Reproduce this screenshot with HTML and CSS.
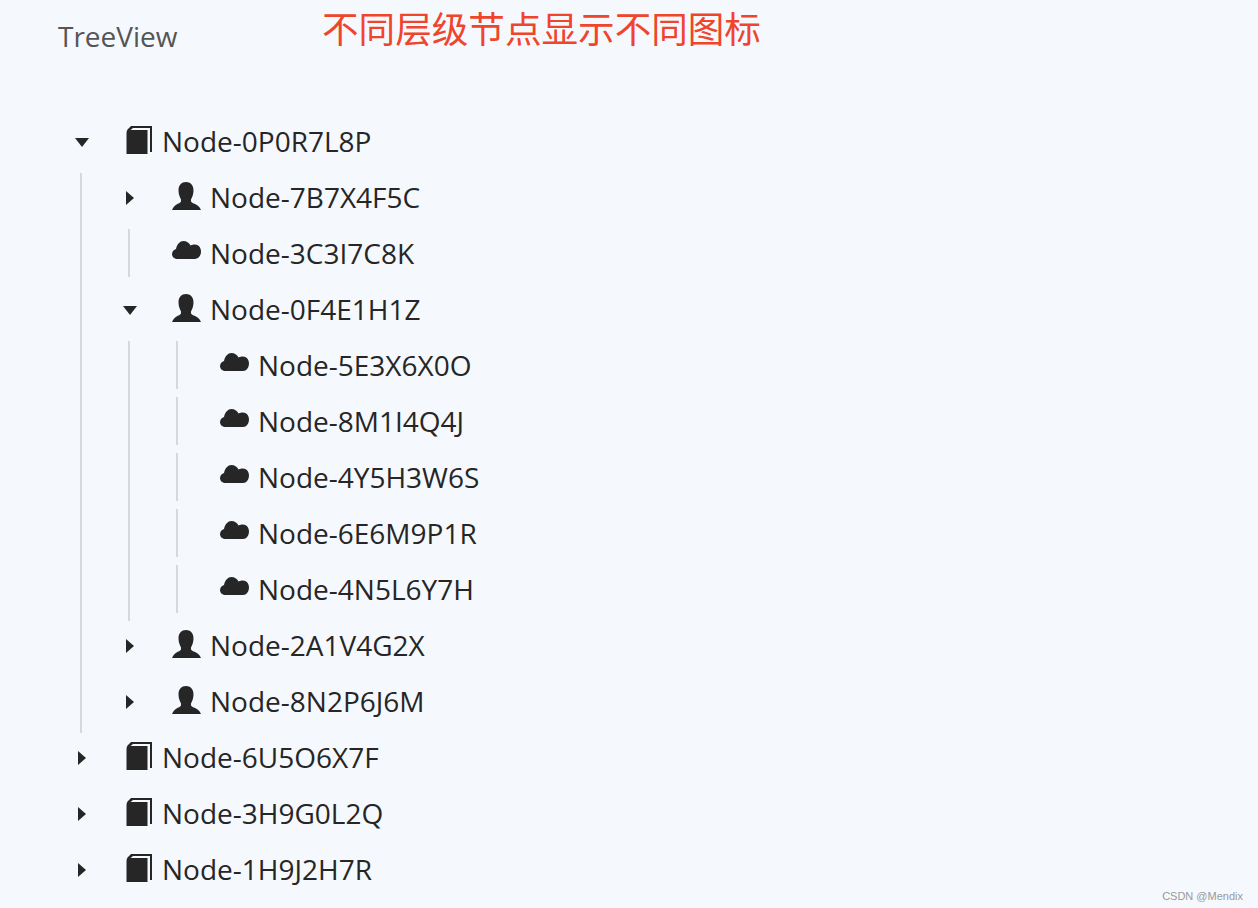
FILE: index.html
```html
<!DOCTYPE html>
<html lang="zh-CN">
<head>
    <meta charset="UTF-8">
    <meta name="viewport" content="width=device-width, initial-scale=1.0">
    <title>TreeView</title>
    <link rel="stylesheet" href="styles.css">
</head>
<body>
    <svg class="defs" width="0" height="0">
        <symbol id="book" viewBox="0 0 30 30">
            <path d="M2.500 8C2.500 5 3 4 4.500 2.500L7 0H28V26H26V2H9L6.500 4H23.500V28H2.500Z"/>
        </symbol>
        <symbol id="user" viewBox="0 0 30 30">
            <path d="M14 0C18.500 0 21.500 3 21.500 8.500C21.500 12.500 20 15.500 19 17.500V19.500C20 21 22 21.500 24 22.500C27 24 28 26 29 28H0C1 26 2 24 4.500 22.500C6.500 21.500 8 21 9 19.500V17.500C8 15.500 6.500 12.500 6.500 8.500C6.500 3 9.500 0 14 0Z"/>
        </symbol>
        <symbol id="cloud" viewBox="0 0 30 30">
            <path d="M6 21C2.500 21 0 19 0 16C0 13.500 2 11.500 4 11C5 6 8 3 11.500 3C14.500 3 17 4.500 18.500 7.500C20 6.500 21.500 6.500 23 6.500C26.500 6.500 29 9.500 29 13.500C29 17.500 26.500 21 23 21Z"/>
        </symbol>
    </svg>

    <h1 class="title">TreeView</h1>
    <div class="note">不同层级节点显示不同图标</div>

    <ul class="tree">
        <li>
            <div class="row"><span class="toggle"><i class="caret-down"></i></span><svg class="icon"><use href="#book"/></svg><span>Node-0P0R7L8P</span></div>
            <ul class="children">
                <li><div class="row"><span class="toggle"><i class="caret-right"></i></span><svg class="icon"><use href="#user"/></svg><span>Node-7B7X4F5C</span></div></li>
                <li><div class="row"><span class="toggle"><i class="leaf-line"></i></span><svg class="icon"><use href="#cloud"/></svg><span>Node-3C3I7C8K</span></div></li>
                <li>
                    <div class="row"><span class="toggle"><i class="caret-down"></i></span><svg class="icon"><use href="#user"/></svg><span>Node-0F4E1H1Z</span></div>
                    <ul class="children">
                        <li><div class="row"><span class="toggle"><i class="leaf-line"></i></span><svg class="icon"><use href="#cloud"/></svg><span>Node-5E3X6X0O</span></div></li>
                        <li><div class="row"><span class="toggle"><i class="leaf-line"></i></span><svg class="icon"><use href="#cloud"/></svg><span>Node-8M1I4Q4J</span></div></li>
                        <li><div class="row"><span class="toggle"><i class="leaf-line"></i></span><svg class="icon"><use href="#cloud"/></svg><span>Node-4Y5H3W6S</span></div></li>
                        <li><div class="row"><span class="toggle"><i class="leaf-line"></i></span><svg class="icon"><use href="#cloud"/></svg><span>Node-6E6M9P1R</span></div></li>
                        <li><div class="row"><span class="toggle"><i class="leaf-line"></i></span><svg class="icon"><use href="#cloud"/></svg><span>Node-4N5L6Y7H</span></div></li>
                    </ul>
                </li>
                <li><div class="row"><span class="toggle"><i class="caret-right"></i></span><svg class="icon"><use href="#user"/></svg><span>Node-2A1V4G2X</span></div></li>
                <li><div class="row"><span class="toggle"><i class="caret-right"></i></span><svg class="icon"><use href="#user"/></svg><span>Node-8N2P6J6M</span></div></li>
            </ul>
        </li>
        <li><div class="row"><span class="toggle"><i class="caret-right"></i></span><svg class="icon"><use href="#book"/></svg><span>Node-6U5O6X7F</span></div></li>
        <li><div class="row"><span class="toggle"><i class="caret-right"></i></span><svg class="icon"><use href="#book"/></svg><span>Node-3H9G0L2Q</span></div></li>
        <li><div class="row"><span class="toggle"><i class="caret-right"></i></span><svg class="icon"><use href="#book"/></svg><span>Node-1H9J2H7R</span></div></li>
    </ul>

    <div class="watermark">CSDN @Mendix</div>
</body>
</html>
```

FILE: styles.css
```css
html, body {
    height: 100%;
}
body {
    margin: 0;
    padding: 0 0 0 58px;
    box-sizing: border-box;
    position: relative;
    overflow: hidden;
    background-color: #f5f9fe;
    color: #262626;
    font-family: "Open Sans", "Noto Sans", sans-serif;
    font-size: 28px;
}
.defs {
    position: absolute;
}
.title {
    margin: 0;
    padding-top: 17px;
    height: 117px;
    box-sizing: border-box;
    font-size: 28px;
    line-height: 38px;
    font-weight: 400;
    color: #555;
}
.note {
    position: absolute;
    left: 322px;
    top: 3px;
    font-family: "Noto Sans CJK SC", sans-serif;
    font-size: 36.600px;
    line-height: 50px;
    color: #f0452d;
}
.watermark {
    position: absolute;
    right: 15px;
    bottom: 6px;
    font-family: "Liberation Sans", sans-serif;
    font-size: 11px;
    color: #999;
}
ul {
    list-style: none;
    margin: 0;
    padding: 0;
}
.children {
    display: flow-root;
    margin-left: 22px;
    padding-left: 24px;
    border-left: 2px solid #d6d8da;
}
.row {
    display: flex;
    align-items: center;
    height: 48px;
    margin-bottom: 8px;
}
.toggle {
    display: flex;
    align-items: center;
    justify-content: center;
    flex: 0 0 48px;
    height: 100%;
}
.caret-right {
    margin-top: 2px;
    border-left: 8px solid #262626;
    border-top: 7px solid transparent;
    border-bottom: 7px solid transparent;
}
.caret-down {
    margin-top: 2px;
    border-top: 9px solid #262626;
    border-left: 7px solid transparent;
    border-right: 7px solid transparent;
}
.leaf-line {
    width: 2px;
    height: 100%;
    margin-right: 2px;
    background-color: #d6d8da;
}
.icon {
    flex: 0 0 30px;
    width: 30px;
    height: 30px;
    margin-left: 18px;
    margin-right: 8px;
    fill: #262626;
}
```
